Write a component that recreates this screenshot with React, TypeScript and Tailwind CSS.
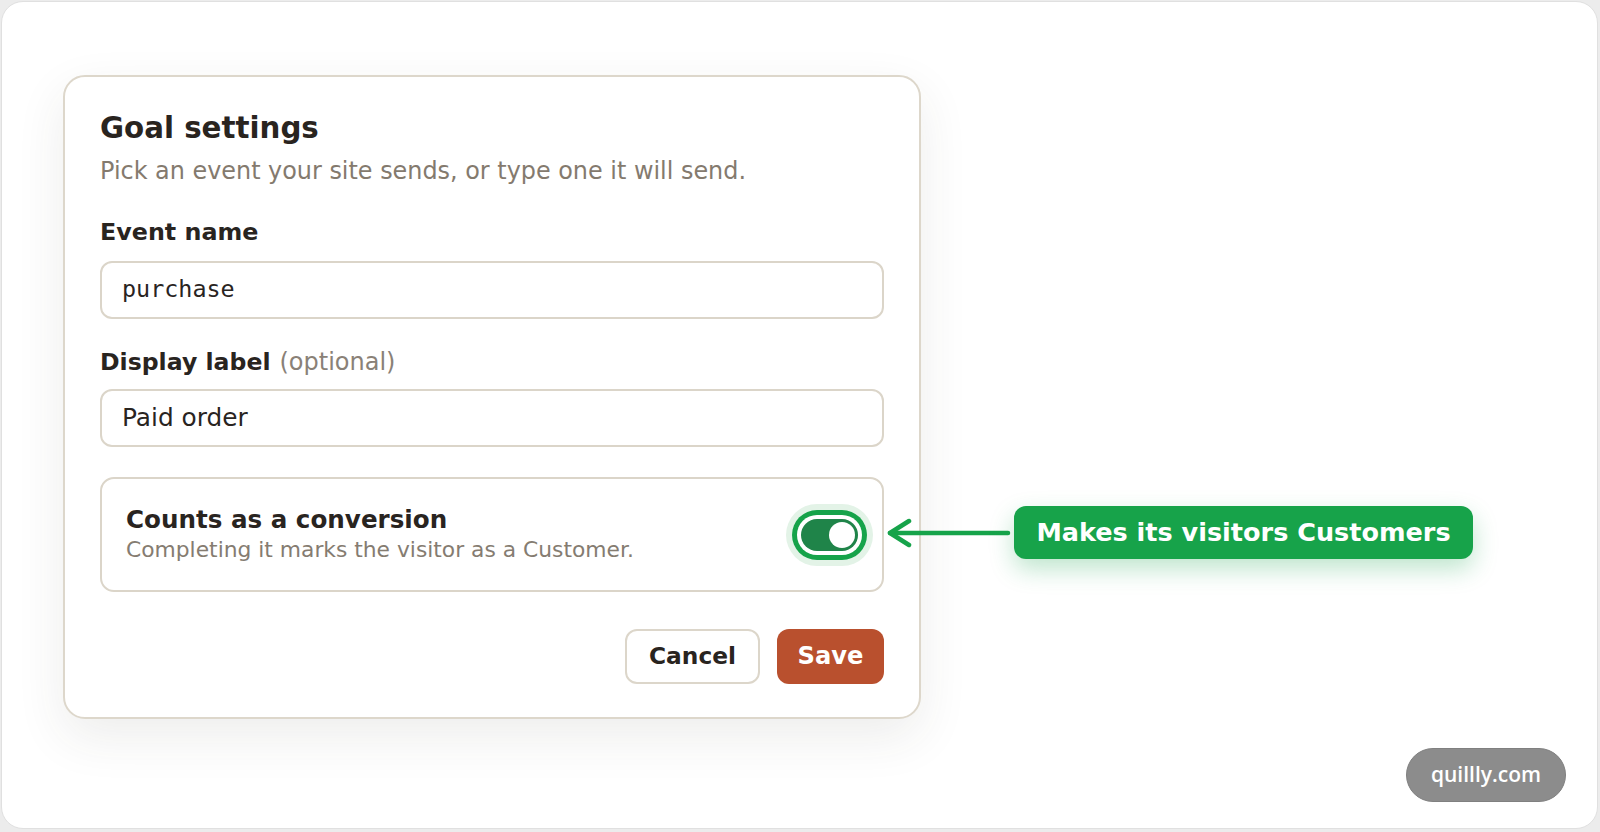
import React from "react";

const sans = { fontFamily: '"DejaVu Sans", Verdana, sans-serif' };

export default function App() {
  return (
    <div className="w-[1600px] h-[832px] bg-[#ececec] pt-px pl-px pr-[2px] pb-[3px]" style={sans}>
      <div className="relative h-full rounded-[22px] border border-[#e0e0e0] bg-white overflow-hidden">
        <div className="ml-[61px] mt-[73px] w-[858px] rounded-[22px] border-2 border-[#ddd7cb] bg-white pt-[34px] px-[35px] pb-[33px] shadow-[0_18px_50px_rgba(60,50,40,0.09)]">
          <h1 className="text-[29.3px] leading-[35px] font-bold text-[#29241f]">Goal settings</h1>
          <p className="mt-[10px] text-[23.9px] leading-[31px] text-[#847a6e]">
            Pick an event your site sends, or type one it will send.
          </p>

          <div className="mt-[31px] text-[23.8px] leading-[28px] font-bold text-[#29241f]">Event name</div>
          <div className="mt-[15px] h-[58px] flex items-center rounded-[12px] border-2 border-[#dbd5c9] px-[20px]">
            <span
              className="text-[23.4px] text-[#29241f]"
              style={{ fontFamily: '"DejaVu Sans Mono", "Liberation Mono", monospace' }}
            >
              purchase
            </span>
          </div>

          <div className="mt-[29px] h-[28px] flex items-baseline gap-[9px] leading-[28px] text-[#29241f]">
            <span className="font-bold text-[23.6px]">Display label</span>
            <span className="text-[24px] text-[#8a8177]">(optional)</span>
          </div>
          <div className="mt-[13px] h-[58px] flex items-center rounded-[12px] border-2 border-[#dbd5c9] px-[20px]">
            <span className="text-[24.8px] text-[#29241f]">Paid order</span>
          </div>

          <div className="mt-[30px] h-[115px] flex items-center justify-between rounded-[14px] border-2 border-[#dbd5c9] pl-[24px] pr-[9px]">
            <div className="flex flex-col">
              <span className="text-[24.6px] leading-[29px] font-bold text-[#29241f]">Counts as a conversion</span>
              <span className="mt-[2px] text-[21.8px] leading-[28px] text-[#857c71]">
                Completing it marks the visitor as a Customer.
              </span>
            </div>
            <div className="rounded-full bg-[#e3f3e7] p-[6px]">
              <div className="rounded-full bg-[#16a34a] p-[5px]">
                <div className="rounded-full bg-white p-[4px]">
                  <div className="w-[57px] h-[32px] rounded-full bg-[#1f8449] flex items-center justify-end pr-[3px]">
                    <div className="w-[26px] h-[26px] rounded-full bg-white" />
                  </div>
                </div>
              </div>
            </div>
          </div>

          <div className="mt-[37px] flex justify-end gap-[17px]">
            <button className="w-[135px] h-[55px] rounded-[12px] border-2 border-[#dcd6ca] bg-white text-[23.3px] font-bold text-[#29241f]">
              Cancel
            </button>
            <button className="w-[107px] h-[55px] rounded-[12px] bg-[#b9502e] text-[24.2px] font-bold text-white">
              Save
            </button>
          </div>
        </div>

        <div className="absolute left-[884px] top-[504px] h-[53px] flex items-center">
          <svg width="126" height="30" viewBox="0 0 126 30" fill="none">
            <path d="M4 15 H122" stroke="#16a34a" strokeWidth="4.5" strokeLinecap="round" />
            <path d="M23 3 L4 15 L23 27" stroke="#16a34a" strokeWidth="4.5" strokeLinecap="round" strokeLinejoin="round" />
          </svg>
          <div className="ml-[2px] w-[459px] h-[53px] rounded-[12px] bg-[#17a34a] flex items-center justify-center text-[25.5px] font-bold text-white shadow-[0_10px_24px_rgba(22,163,74,0.28)]">
            Makes its visitors Customers
          </div>
        </div>

        <div
          className="absolute right-[31px] bottom-[26px] w-[160px] h-[54px] rounded-full bg-[#8c8c8c] border border-[#808080] flex items-center justify-center text-[21px] font-semibold text-white"
          style={{ fontFamily: '"Open Sans", "Noto Sans", sans-serif' }}
        >
          quillly.com
        </div>
      </div>
    </div>
  );
}
